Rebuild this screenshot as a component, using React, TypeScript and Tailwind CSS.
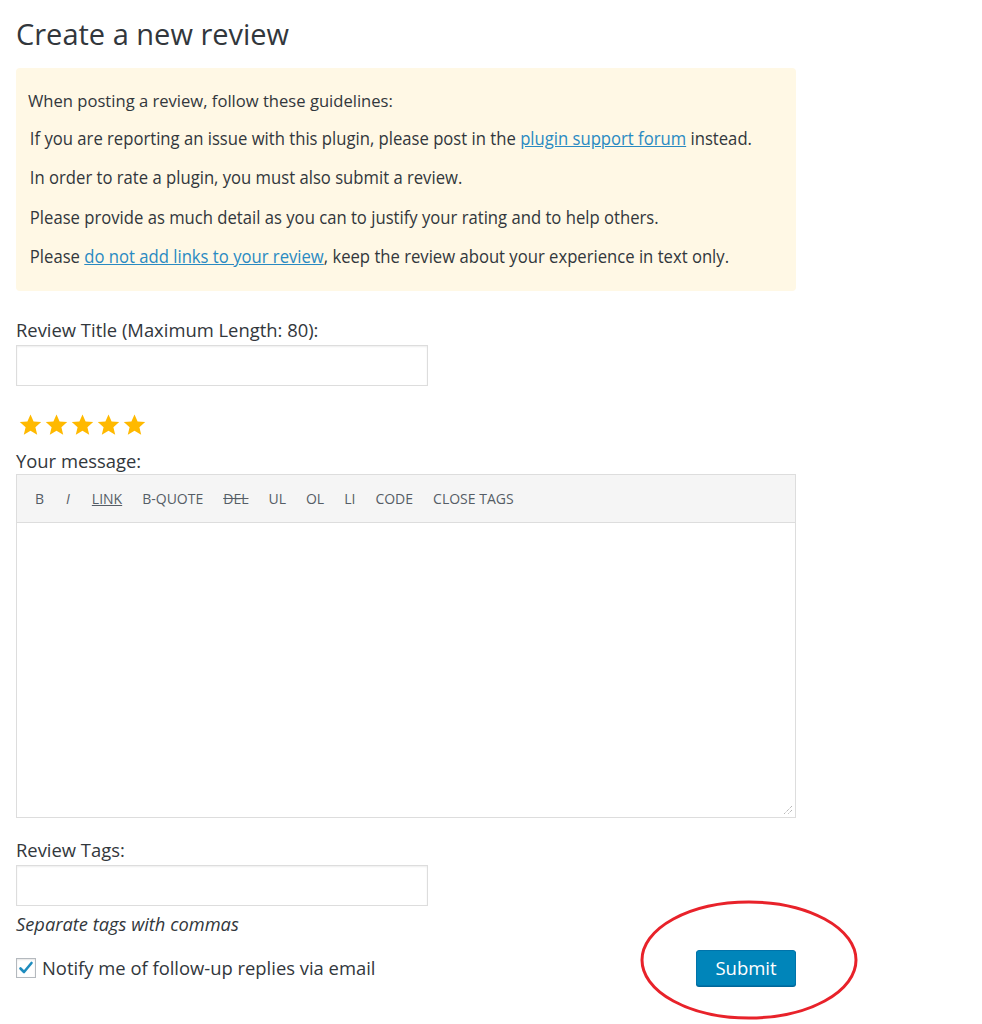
import React from "react";

const Star = () => (
  <svg width="25" height="24" viewBox="0 0 24 24" className="block">
    <path
      fill="#ffb900"
      d="M12 1.4l3.1 7 7.6.7-5.8 5.1 1.8 7.5L12 17.8l-6.7 3.9 1.8-7.5-5.8-5.1 7.6-.7z"
    />
  </svg>
);

export default function App() {
  const tools = ["B", "I", "LINK", "B-QUOTE", "DEL", "UL", "OL", "LI", "CODE", "CLOSE TAGS"];
  return (
    <div
      className="bg-white min-h-[1024px] w-[982px] text-[#32373c]"
      style={{ fontFamily: '"Open Sans", sans-serif' }}
    >
      <div className="pl-4 pt-[14px] w-[796px]">
        <h1 className="text-[29px] leading-[40px] font-normal text-[#32373c]">Create a new review</h1>
        <div className="mt-[14px] bg-[#fff8e5] rounded-[4px] pl-3 pr-3 pt-[20px] pb-[16px] h-[223px] overflow-hidden">
          <p className="text-[16.6px] leading-[26px]">When posting a review, follow these guidelines:</p>
          <ul className="mt-[11px] pl-[2px] flex flex-col gap-[13.4px] text-[18px] leading-[26px] origin-left scale-x-[0.925] w-[840px]">
            <li>
              If you are reporting an issue with this plugin, please post in the{" "}
              <a className="text-[#2a8ac2] underline" href="#">plugin support forum</a> instead.
            </li>
            <li>In order to rate a plugin, you must also submit a review.</li>
            <li>Please provide as much detail as you can to justify your rating and to help others.</li>
            <li>
              Please <a className="text-[#2a8ac2] underline" href="#">do not add links to your review</a>, keep the review about your experience in text only.
            </li>
          </ul>
        </div>

        <label className="block mt-[27px] text-[18.4px] leading-[24px] text-[#32373c]">Review Title (Maximum Length: 80):</label>
        <div className="mt-[3px] w-[412px] h-[41px] border border-[#dddddd] bg-white shadow-[inset_0_1px_2px_rgba(0,0,0,0.07)]" />

        <div className="mt-[27px] flex gap-[1px] pl-[2px]">
          <Star /><Star /><Star /><Star /><Star />
        </div>

        <label className="block mt-[12px] text-[18.4px] leading-[24px]">Your message:</label>
        <div className="mt-[1px] border border-[#dddddd]">
          <div className="h-[48px] bg-[#f5f5f5] border-b border-[#dddddd] flex items-center pl-[18px] gap-[20px] text-[14px] text-[#555d66]">
            {tools.map((t) => (
              <span
                key={t}
                className={
                  t === "LINK"
                    ? "underline"
                    : t === "DEL"
                    ? "line-through"
                    : t === "I"
                    ? "italic px-[2px]"
                    : ""
                }
              >
                {t}
              </span>
            ))}
          </div>
          <div className="relative h-[294px] bg-white">
            <svg className="absolute right-[2px] bottom-[2px]" width="10" height="10" viewBox="0 0 10 10">
              <path d="M9 1L1 9M9 5L5 9" stroke="#999" strokeWidth="1" strokeDasharray="1 1" />
            </svg>
          </div>
        </div>

        <label className="block mt-[20px] text-[18.4px] leading-[24px]">Review Tags:</label>
        <div className="mt-[3px] w-[412px] h-[41px] border border-[#dddddd] bg-white shadow-[inset_0_1px_2px_rgba(0,0,0,0.07)]" />
        <p className="mt-[6px] italic text-[18.3px] leading-[24px]">Separate tags with commas</p>

        <div className="mt-[14px] flex items-center justify-between">
          <label className="flex items-center gap-[6px] text-[18.4px] leading-[24px]">
            <span className="w-[20px] h-[20px] border border-[#b4b9be] bg-white flex items-center justify-center shadow-[inset_0_1px_2px_rgba(0,0,0,0.1)]">
              <svg width="16" height="16" viewBox="0 0 16 16">
                <path d="M2.5 8.5l3.5 3.5 7.5-9" fill="none" stroke="#1e8cbe" strokeWidth="2.6" strokeLinecap="round" strokeLinejoin="round" />
              </svg>
            </span>
            Notify me of follow-up replies via email
          </label>
          <div className="relative">
            <button className="w-[100px] h-[36px] bg-[#0085ba] border border-[#0073aa] rounded-[3px] text-white text-[18.5px] shadow-[0_1px_0_#006799]">
              Submit
            </button>
            <svg
              className="absolute left-[-57px] top-[-51px] pointer-events-none"
              width="220"
              height="122"
              viewBox="0 0 220 122"
            >
              <ellipse cx="110" cy="61" rx="107" ry="58" fill="none" stroke="#e8222a" strokeWidth="3" />
            </svg>
          </div>
        </div>
      </div>
    </div>
  );
}
